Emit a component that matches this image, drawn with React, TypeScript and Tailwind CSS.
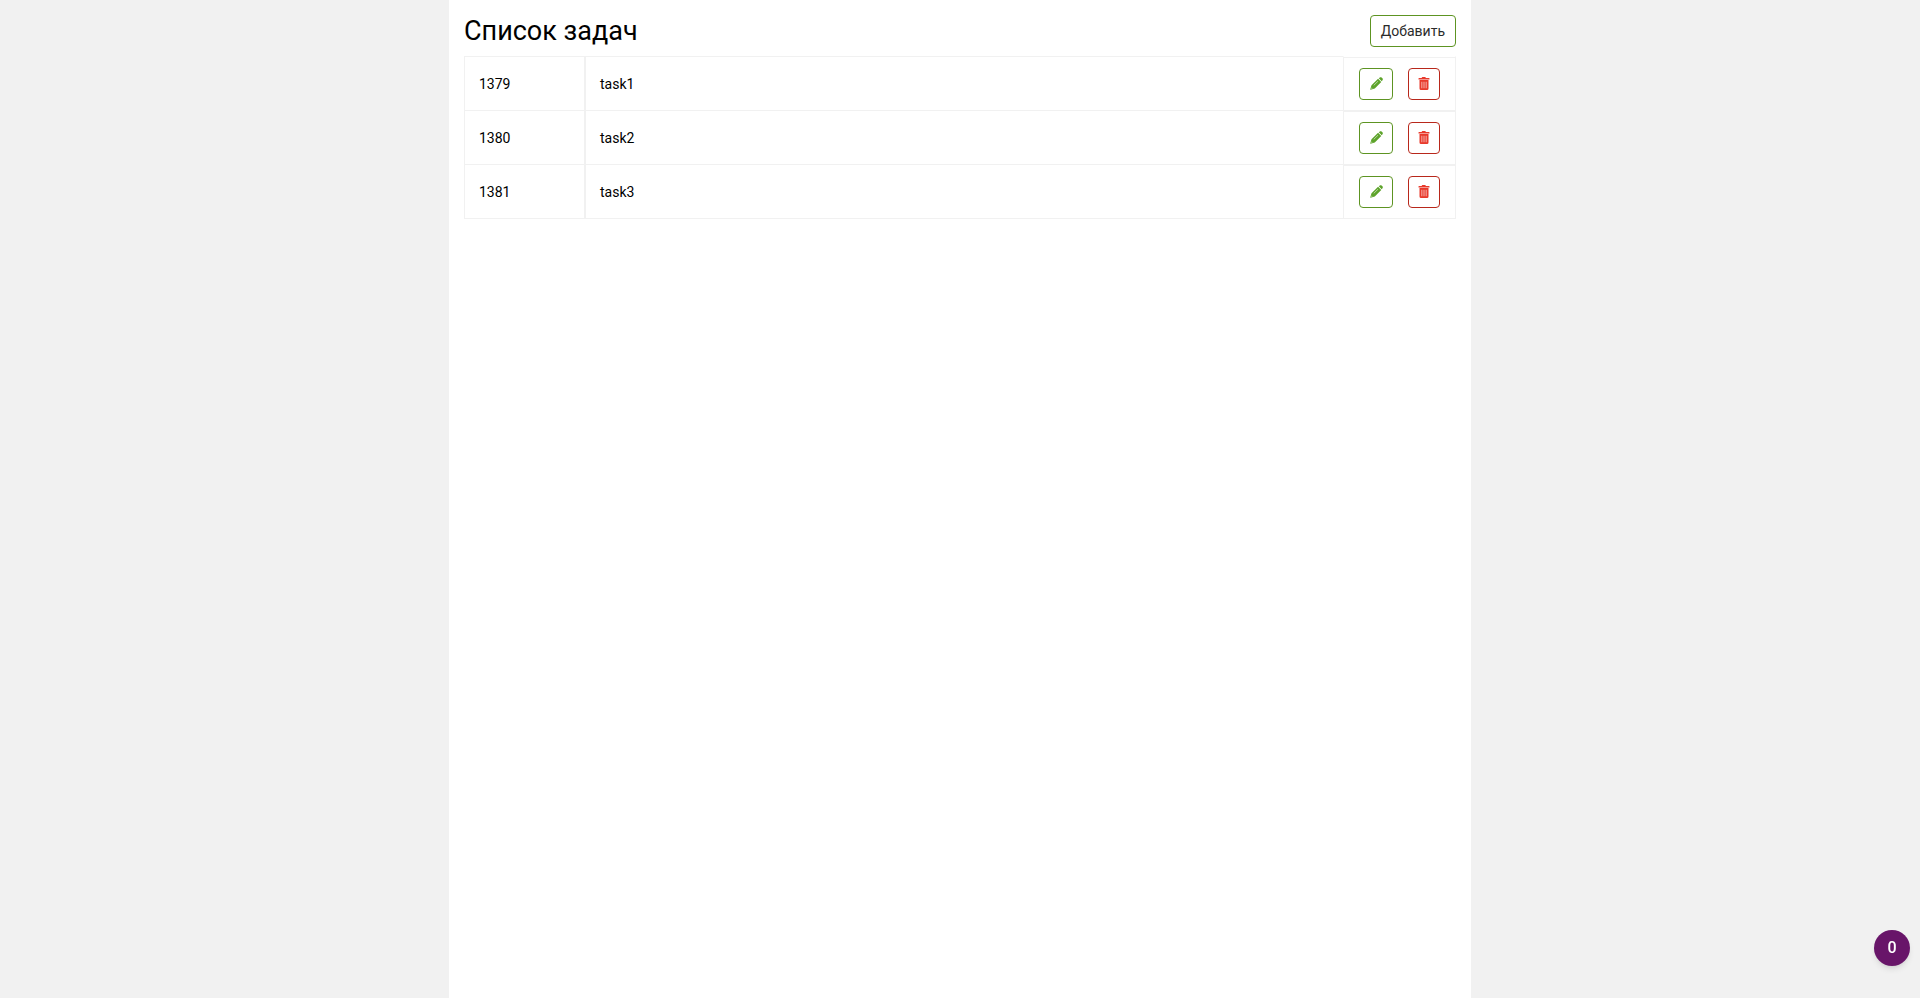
import { useState } from "react";

type Task = { id: number; title: string };

const tasks: Task[] = [
  { id: 1379, title: "task1" },
  { id: 1380, title: "task2" },
  { id: 1381, title: "task3" },
];

function PencilIcon() {
  return (
    <svg viewBox="0 0 26 26" className="mb-px size-[13px]" fill="currentColor" aria-hidden="true">
      <path d="M17.600 2.600 19.600 1C21 0 22.500 0.200 23.600 1.300L24.900 2.700C26 3.800 26 5.300 25 6.600L23.400 8.500Z" />
      <path
        fillRule="evenodd"
        d="M16.200 3.600 22.500 9.900 9.600 23 1 25.600 0.400 25 3 16.400ZM15.900 7.900 7.200 16.600 7.800 17.200 16.500 8.500ZM3.500 20.900 2.500 23.500 5.100 22.500Z"
      />
    </svg>
  );
}

function TrashIcon() {
  return (
    <svg viewBox="0 0 24 26" className="mb-px h-[13px] w-3" fill="currentColor" aria-hidden="true">
      <path d="M9 0h5a1.500 1.500 0 0 1 1.500 1.500V2H22a1 1 0 0 1 1 1v2H1V3a1 1 0 0 1 1-1h5.500V1.500A1.500 1.500 0 0 1 9 0Z" />
      <path
        fillRule="evenodd"
        d="M3 6h18V23a3 3 0 0 1-3 3H6a3 3 0 0 1-3-3ZM7.200 9.500V22.500H8.400V9.500ZM11.400 9.500V22.500H12.600V9.500ZM15.600 9.500V22.500H16.800V9.500Z"
      />
    </svg>
  );
}

function TaskRow({ task }: { task: Task }) {
  return (
    <tr className="group">
      <td className="w-[121px] border-x border-t border-[#f1f1f1] px-[14px] group-last:border-b">{task.id}</td>
      <td className="border-t border-l border-[#f1f1f1] px-[14px] group-last:border-b">{task.title}</td>
      <td className="w-[113px] border-x border-t border-[#f1f1f1] p-0 group-first:border-t-transparent group-last:border-b">
        <div className="flex items-center gap-[15px] border-t border-[#f1f1f1] px-[15px] py-[10px]">
          <button
            type="button"
            aria-label="Редактировать"
            className="flex h-8 w-[34px] items-center justify-center rounded border border-[#5d9422] bg-white text-[#5da32a]"
          >
            <PencilIcon />
          </button>
          <button
            type="button"
            aria-label="Удалить"
            className="flex size-8 items-center justify-center rounded border border-[#b8281b] bg-white text-[#e8392b]"
          >
            <TrashIcon />
          </button>
        </div>
      </td>
    </tr>
  );
}

export default function App() {
  const [items] = useState<Task[]>(tasks);

  return (
    <div className="min-h-screen bg-[#f1f1f1] font-['Roboto',sans-serif] text-sm text-black">
      <main className="mx-auto min-h-screen max-w-[1022px] bg-white px-[15px] pt-[15px]">
        <header className="flex h-8 items-center justify-between">
          <h1 className="text-[27px] leading-8">Список задач</h1>
          <button
            type="button"
            className="h-8 rounded border border-[#5d9422] bg-white px-[10px] text-sm text-[#2b2b2b]"
          >
            Добавить
          </button>
        </header>
        <table className="mt-[9px] w-full table-auto border-separate border-spacing-0">
          <tbody>
            {items.map((task) => (
              <TaskRow key={task.id} task={task} />
            ))}
          </tbody>
        </table>
      </main>
      <button
        type="button"
        className="fixed right-[10px] bottom-8 flex size-9 items-center justify-center rounded-full bg-[#681569] text-base font-medium text-white shadow-md"
      >
        0
      </button>
    </div>
  );
}
